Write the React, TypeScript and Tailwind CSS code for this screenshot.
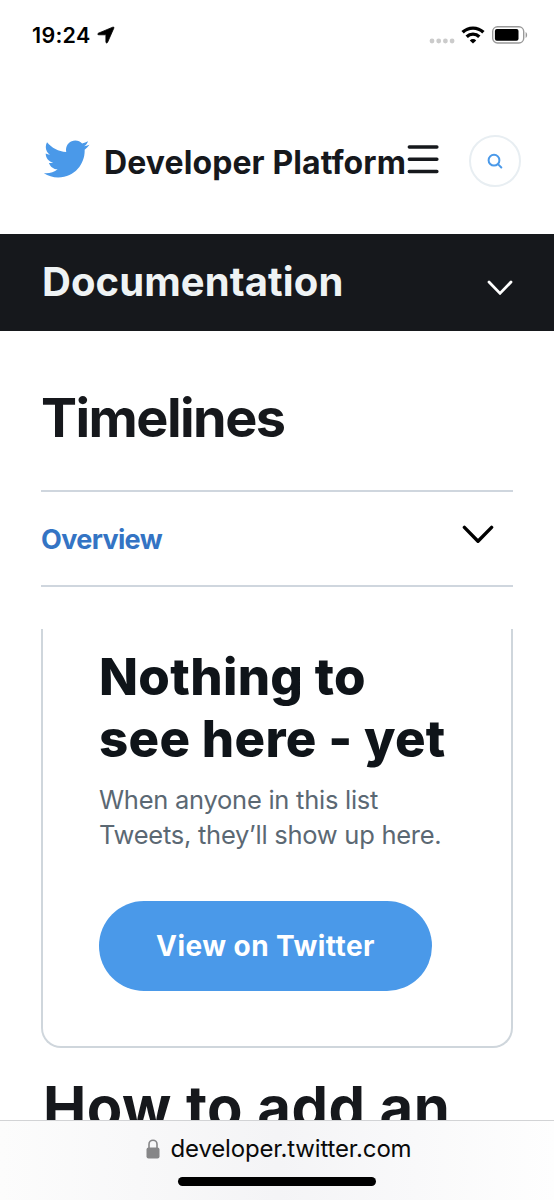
import React from 'react'

const StatusBar = () => {
    return (
        <div className="flex h-[70px] shrink-0 items-center justify-between pl-8 pr-[26px] text-black">
            <div className="flex items-center gap-[6px]">
                <span className="mt-[2px] text-[21.5px] font-semibold leading-none tracking-[0.3px]">19:24</span>
                <svg width="18" height="18" viewBox="0 0 18 18" fill="currentColor" stroke="currentColor" strokeWidth=".8" strokeLinejoin="round">
                    <path d="M15.7 1.2 1.4 7.2c-1 .5-.8 1.6.4 1.6h6.8c.2 0 .3.1.3.3v6.8c0 1.3 1.2 1.5 1.7.4L16.8 2.2C17.2 1.300 16.500.8 15.700 1.200z" />
                </svg>
            </div>
            <div className="flex items-center">
                <svg width="26" height="18" viewBox="0 0 26 18" fill="#cbcbcb">
                    <circle cx="3" cy="15" r="2.4" />
                    <circle cx="9.7" cy="15" r="2.4" />
                    <circle cx="16.4" cy="15" r="2.4" />
                    <circle cx="23.1" cy="15" r="2.4" />
                </svg>
                <svg className="ml-[6px]" width="24" height="18" viewBox="0 0 24 18" fill="none" stroke="currentColor" strokeWidth="3.4">
                    <path d="M1.6 6.3a15 15 0 0 1 20.8 0" />
                    <path d="M5.7 10.7a9.1 9.1 0 0 1 12.6 0" />
                    <path d="M12 17.6 8.8 14.4a4.6 4.6 0 0 1 6.4 0z" fill="currentColor" stroke="none" />
                </svg>
                <svg className="ml-[7px]" width="36" height="18" viewBox="0 0 36 18">
                    <rect x=".7" y=".8" width="31" height="16.2" rx="4.8" fill="none" stroke="#999" strokeWidth="1.4" />
                    <rect x="2.9" y="3" width="23.6" height="11.8" rx="2" />
                    <path d="M33.6 6v6c2-.8 2-5.2 0-6z" fill="#999" />
                </svg>
            </div>
        </div>
    )
}

const Header = () => {
    return (
        <header className="flex h-[164px] shrink-0 items-start pl-[42px] pt-[65px]">
            <svg width="48" height="48" viewBox="0 0 24 24" fill="#4a99e9">
                <path d="M23.643 4.937c-.835.37-1.732.62-2.675.733.962-.576 1.7-1.49 2.048-2.578-.9.534-1.897.922-2.958 1.13-.85-.904-2.06-1.47-3.4-1.47-2.572 0-4.658 2.086-4.658 4.66 0 .364.042.718.12 1.06-3.873-.195-7.304-2.05-9.602-4.868-.4.69-.63 1.49-.63 2.342 0 1.616.823 3.043 2.072 3.878-.764-.025-1.482-.234-2.11-.583v.06c0 2.257 1.605 4.14 3.737 4.568-.392.106-.803.162-1.227.162-.3 0-.593-.028-.877-.082.593 1.85 2.313 3.198 4.352 3.234-1.595 1.25-3.604 1.995-5.786 1.995-.376 0-.747-.022-1.112-.065 2.062 1.323 4.51 2.093 7.14 2.093 8.57 0 13.255-7.098 13.255-13.254 0-.2-.005-.402-.014-.602.91-.658 1.7-1.477 2.323-2.41z" />
            </svg>
            <span className="ml-[14px] mt-[8px] w-[303px] whitespace-nowrap text-[32px] font-bold leading-[40px] tracking-[0.1px] text-[#16181c]">
                Developer Platform
            </span>
            <svg className="mt-[8px]" width="32" height="32" viewBox="0 0 32 32" fill="none" stroke="#16181c" strokeWidth="3.4" strokeLinecap="round">
                <path d="M2.3 4h27.6M2.3 16.3h27.6M2.3 28.5h27.6" />
            </svg>
            <button className="ml-[30px] flex h-[52px] w-[52px] items-center justify-center rounded-full border-2 border-[#e8eef2]">
                <svg width="16" height="16" viewBox="0 0 16 16" fill="none" stroke="#4a99e9" strokeWidth="2" strokeLinecap="round">
                    <circle cx="7" cy="7.2" r="5.4" />
                    <path d="m11.2 11.4 3.1 3.1" />
                </svg>
            </button>
        </header>
    )
}

const App = () => {
    return (
        <div className="flex h-[1200px] w-[554px] flex-col overflow-hidden bg-white font-['Inter',sans-serif]">
            <StatusBar />
            <Header />

            <div className="flex h-[97px] shrink-0 items-start justify-between bg-[#16181c] pl-[42px] pr-[41px]">
                <span className="mt-[24px] whitespace-nowrap text-[40px] font-bold leading-[48px] tracking-[0.1px] text-[#eff3f4]">Documentation</span>
                <svg className="mt-[46px]" width="26" height="16" viewBox="0 0 26 16" fill="none" stroke="#fff" strokeWidth="2.8" strokeLinecap="round" strokeLinejoin="round">
                    <path d="m2 2 11 11.4L24 2" />
                </svg>
            </div>

            {/* page content, cut off by the browser bar */}
            <main className="min-h-0 flex-1 overflow-hidden pl-[41px] pr-[41px]">
                <h1 className="pt-[55px] text-[54px] font-bold leading-[64px] tracking-[-1.55px] text-[#16181c]">Timelines</h1>
                <div className="mt-[40px] flex h-[97px] items-start justify-between border-y-2 border-[#cfd6de]">
                    <span className="mt-[31px] text-[27px] font-bold leading-[34px] tracking-[-0.65px] text-[#3474c4]">Overview</span>
                    <svg className="mr-[19px] mt-[33px]" width="32" height="20" viewBox="0 0 32 20" fill="none" stroke="#000" strokeWidth="3.400" strokeLinecap="round" strokeLinejoin="round">
                        <path d="m2.4 2.4 13.6 13.8L29.6 2.4" />
                    </svg>
                </div>

                <div className="mt-[42px] h-[419px] rounded-b-[20px] border-x-2 border-b-2 border-[#cfd6dc] pl-[56px] pt-[17px]">
                    <h2 className="whitespace-nowrap text-[51px] font-extrabold leading-[62px] tracking-[0.3px] text-[#0f1419]">
                        Nothing to<br />see here - yet
                    </h2>
                    <p className="mt-[13px] whitespace-nowrap text-[25.5px] leading-[34.7px] tracking-[-0.26px] text-[#5b6873]">
                        When anyone in this list<br />Tweets, they’ll show up here.
                    </p>
                    <button className="mt-[49px] flex h-[90px] w-[333px] items-center justify-center rounded-full bg-[#4a99e9] text-[28px] font-bold tracking-[0.45px] text-white">
                        View on Twitter
                    </button>
                </div>

                <h2 className="ml-[2px] mt-[27px] whitespace-nowrap text-[58px] font-bold leading-[64px] tracking-[0.45px] text-[#16181c]">How to add an</h2>
            </main>

            <footer className="flex h-[80px] shrink-0 flex-col items-center border-t border-[#d2d3d5] bg-linear-to-r from-[#fcfcfc] via-[#f4f4f6] to-[#fefefe]">
                <div className="ml-[3px] mt-[12px] flex h-[32px] items-center gap-[11px]">
                    <svg width="14" height="20" viewBox="0 0 14 20">
                        <rect x=".5" y="8.4" width="13" height="11" rx="2" fill="#868688" />
                        <path d="M3 9V5.2a4 4 0 0 1 8 0V9" fill="none" stroke="#868688" strokeWidth="1.6" />
                    </svg>
                    <span className="text-[24px] leading-[32px] tracking-[-0.18px] text-[#0a0a0a]">developer.twitter.com</span>
                </div>
                <div className="mt-[12px] h-[9px] w-[198px] rounded-full bg-black" />
            </footer>
        </div>
    )
}

export default App
